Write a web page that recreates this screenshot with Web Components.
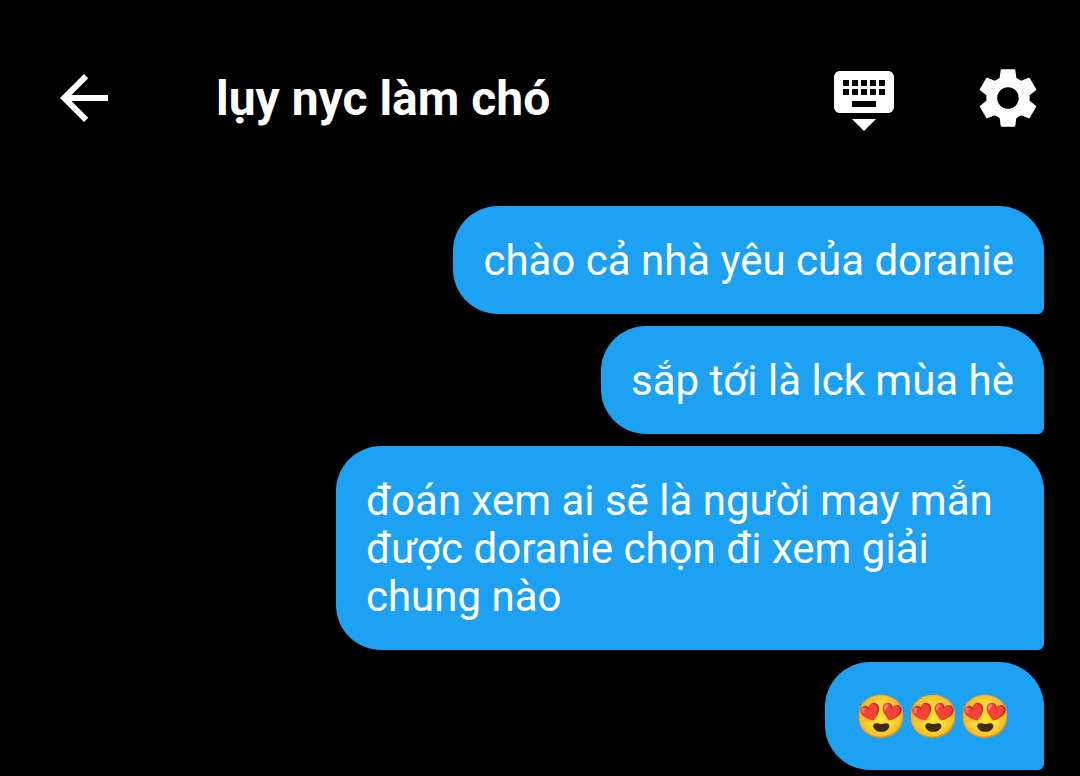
<!DOCTYPE html>
<html lang="vi">
<head>
<meta charset="utf-8">
<meta name="viewport" content="width=device-width, initial-scale=1">
<title>lụy nyc làm chó</title>
<style>
  html { background: #000; }
  body { margin: 0; font-family: Roboto, "Noto Sans", sans-serif; color: #fff; }
</style>
</head>
<body>
<chat-screen>
  <chat-header slot="header">
    <icon-button slot="start" label="Quay lại" icon="back"></icon-button>
    lụy nyc làm chó
    <icon-button slot="end" label="Ẩn bàn phím" icon="keyboard"></icon-button>
    <icon-button slot="end" label="Cài đặt" icon="settings"></icon-button>
  </chat-header>
  <chat-bubble>chào cả nhà yêu của doranie</chat-bubble>
  <chat-bubble>sắp tới là lck mùa hè</chat-bubble>
  <chat-bubble>đoán xem ai sẽ là người may mắn được doranie chọn đi xem giải chung nào</chat-bubble>
  <chat-bubble>😍😍😍</chat-bubble>
</chat-screen>

<script>
  const ICONS = {
    back: 'M20 11H7.83l5.59-5.59L12 4l-8 8 8 8 1.41-1.41L7.83 13H20v-2z',
    keyboard: 'M20 3H4c-1.100 0-1.990.9-1.990 2L2 15c0 1.100.9 2 2 2h16c1.100 0 2-.9 2-2V5c0-1.100-.9-2-2-2zm-9 3h2v2h-2V6zm0 3h2v2h-2V9zM8 6h2v2H8V6zm0 3h2v2H8V9zm-1 2H5V9h2v2zm0-3H5V6h2v2zm9 7H8v-2h8v2zm0-4h-2V9h2v2zm0-3h-2V6h2v2zm3 3h-2V9h2v2zm0-3h-2V6h2v2zm-7 15l4-4H8l4 4z',
    settings: 'M9.85 2.4H14.15Q14.4 2.4 14.43 2.65L14.8 5.3L16.4 6.23L18.88 5.21Q19.11 5.12 19.24 5.34L21.39 9.06Q21.51 9.28 21.31 9.43L19.2 11.07V12.93L21.31 14.57Q21.51 14.72 21.39 14.94L19.24 18.66Q19.11 18.88 18.88 18.79L16.4 17.77L14.8 18.7L14.43 21.35Q14.4 21.6 14.15 21.6H9.85Q9.6 21.6 9.57 21.35L9.2 18.7L7.6 17.77L5.12 18.79Q4.89 18.88 4.76 18.66L2.61 14.94Q2.49 14.72 2.69 14.57L4.8 12.93V11.07L2.69 9.43Q2.49 9.28 2.61 9.06L4.76 5.34Q4.89 5.12 5.12 5.21L7.6 6.23L9.2 5.3L9.57 2.65Q9.6 2.4 9.85 2.4zM12 8.4a3.6 3.6 0 1 0 0 7.2a3.6 3.6 0 1 0 0-7.2z'
  };

  class IconButton extends HTMLElement {
    connectedCallback() {
      if (this.shadowRoot) return;
      this.attachShadow({ mode: 'open' }).innerHTML = `
        <style>
          :host { display: block; flex: none; }
          button { display: block; width: 72px; height: 72px; margin: 0; padding: 0;
                   border: 0; background: none; color: inherit; cursor: pointer; }
          svg { display: block; width: 100%; height: 100%; fill: currentColor; fill-rule: evenodd; }
        </style>
        <button type="button" aria-label="${this.getAttribute('label')}">
          <svg viewBox="0 0 24 24" aria-hidden="true"><path d="${ICONS[this.getAttribute('icon')]}"/></svg>
        </button>`;
    }
  }

  class ChatHeader extends HTMLElement {
    constructor() {
      super();
      this.attachShadow({ mode: 'open' }).innerHTML = `
        <style>
          :host { display: block; }
          header { display: flex; align-items: center; padding: 62px 36px 72px 48px; }
          h1 { flex: 1; min-width: 0; margin: 0 24px 0 96px; padding-top: 2px; font-size: 48px;
               line-height: 56px; font-weight: 700; white-space: nowrap; overflow: hidden;
               text-overflow: ellipsis; }
          .actions { display: flex; gap: 72px; }
        </style>
        <header>
          <slot name="start"></slot>
          <h1><slot></slot></h1>
          <div class="actions"><slot name="end"></slot></div>
        </header>`;
    }
  }

  class ChatBubble extends HTMLElement {
    constructor() {
      super();
      this.attachShadow({ mode: 'open' }).innerHTML = `
        <style>
          :host { display: block; box-sizing: border-box; min-width: 219px;
                  padding: 31px 30px 29px; background: #1da1f2;
                  border-radius: 45px 45px 6px 45px; font-size: 42px; line-height: 48px;
                  overflow-wrap: anywhere; }
        </style>
        <slot></slot>`;
    }
  }

  class ChatScreen extends HTMLElement {
    constructor() {
      super();
      this.attachShadow({ mode: 'open' }).innerHTML = `
        <style>
          :host { display: block; }
          main { display: flex; flex-direction: column; align-items: flex-end; gap: 12px;
                 padding: 0 36px 6px 336px; }
        </style>
        <slot name="header"></slot>
        <main><slot></slot></main>`;
    }
  }

  customElements.define('icon-button', IconButton);
  customElements.define('chat-header', ChatHeader);
  customElements.define('chat-bubble', ChatBubble);
  customElements.define('chat-screen', ChatScreen);
</script>
</body>
</html>
